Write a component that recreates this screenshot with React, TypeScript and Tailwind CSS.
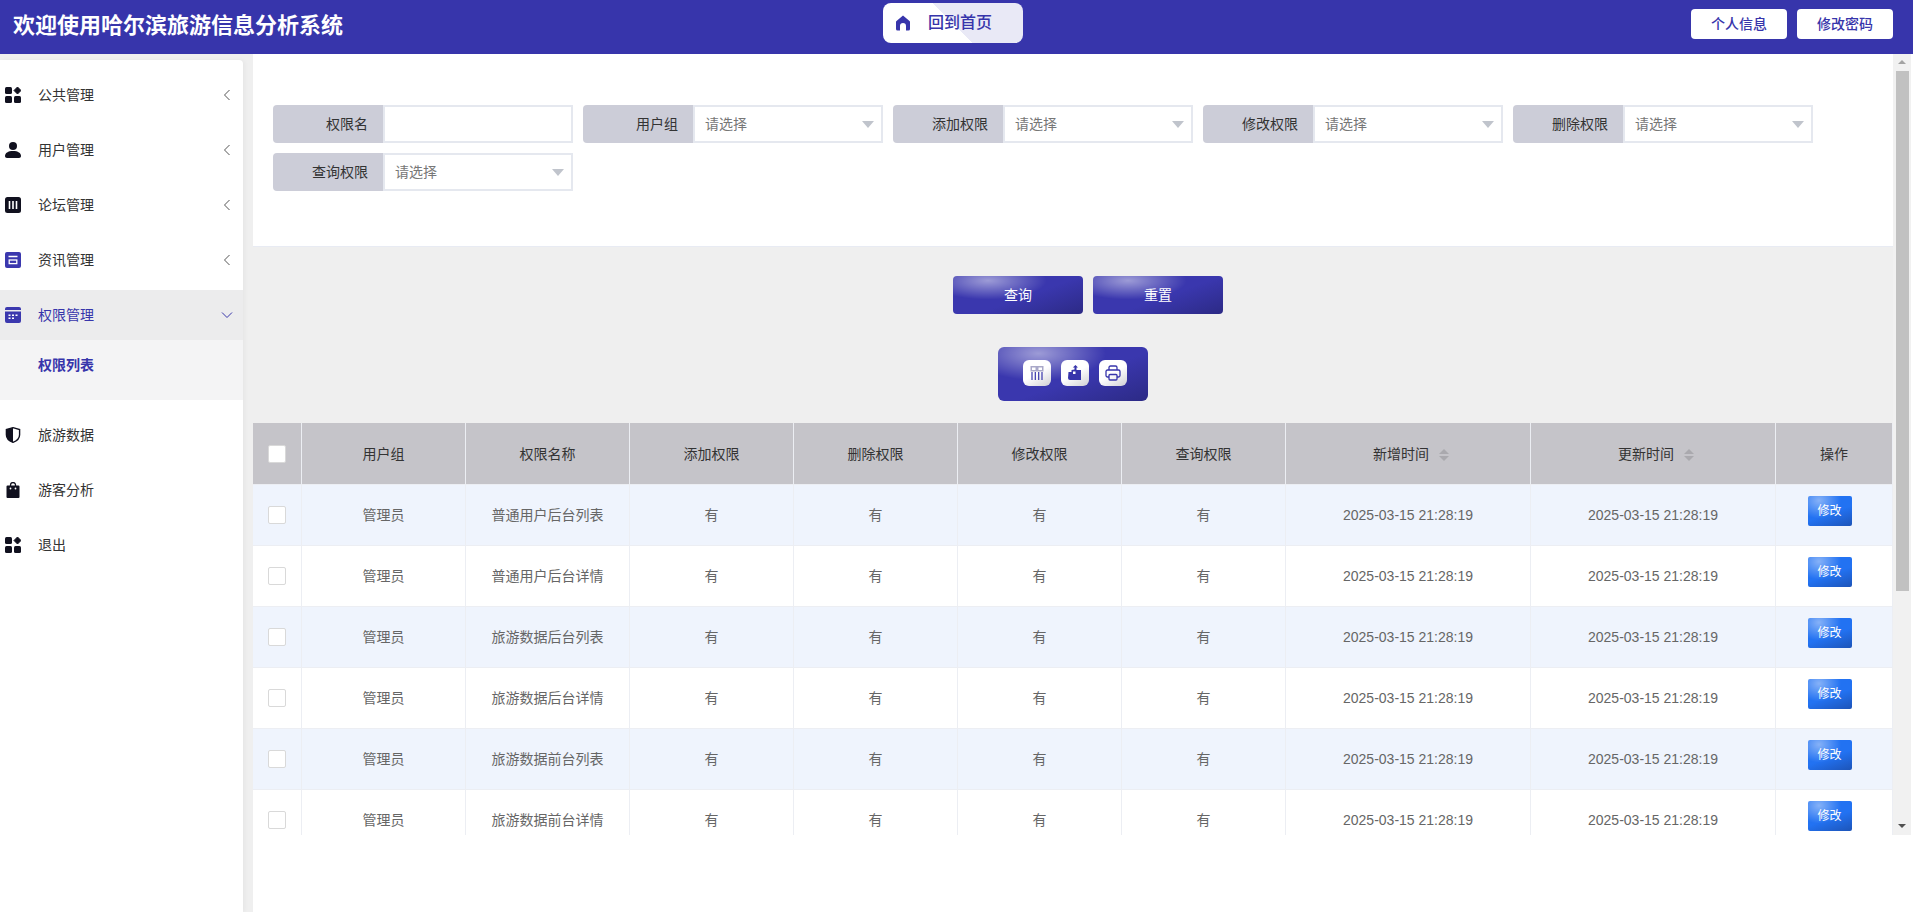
import { ReactNode } from "react";

const FONT = "font-['Liberation_Sans','Noto_Sans_CJK_SC',sans-serif]";
const BTN_BG =
  "bg-[radial-gradient(ellipse_45%_50%_at_27%_12%,rgba(255,255,255,0.5),rgba(255,255,255,0)),linear-gradient(160deg,#3a37ae_55%,#2c2a85)]";
const ICON_BTN =
  "w-[28px] h-[26px] rounded-md flex items-center justify-center bg-[linear-gradient(150deg,#ffffff_50%,#cfcfd4)]";

const AppsIcon = ({ color = "#11111f" }: { color?: string }) => (
  <svg viewBox="0 0 16 16" className="w-4 h-4" fill={color}>
    <rect x="0" y="0" width="7" height="7" rx="1.5" />
    <rect x="0" y="9" width="7" height="7" rx="1.5" />
    <rect x="9" y="9" width="7" height="7" rx="1.5" />
    <path d="M12.5 0 16 3.5 12.5 7 9 3.5Z" strokeLinejoin="round" stroke={color} strokeWidth="1" />
  </svg>
);

const UserIcon = () => (
  <svg viewBox="0 0 16 16" className="w-4 h-4" fill="#11111f">
    <circle cx="8" cy="4" r="4" />
    <path d="M0 14c0-3 3-5 8-5s8 2 8 5c0 1.300-.8 2-2 2H2c-1.200 0-2-.7-2-2Z" />
  </svg>
);

const ColumnsIcon = () => (
  <svg viewBox="0 0 16 16" className="w-4 h-4">
    <rect width="16" height="16" rx="2.500" fill="#11111f" />
    <path d="M4.500 4v8M8 4v8M11.500 4v8" stroke="#fff" strokeWidth="1.600" />
  </svg>
);

const CardIcon = () => (
  <svg viewBox="0 0 16 16" className="w-4 h-4">
    <rect width="16" height="16" rx="2" fill="#3b38ae" />
    <path d="M3.500 4.500h9" stroke="#fff" strokeWidth="1.500" />
    <rect x="4.200" y="8" width="7.600" height="3.600" fill="none" stroke="#fff" strokeWidth="1.300" />
  </svg>
);

const CalendarIcon = () => (
  <svg viewBox="0 0 16 16" className="w-4 h-4" fill="#3b38ae">
    <path d="M2 0h12a2 2 0 0 1 2 2v1H0V2a2 2 0 0 1 2-2Z" />
    <path d="M0 4.500h16V14a2 2 0 0 1-2 2H2a2 2 0 0 1-2-2Z" />
    <path d="M3.500 7.500h2v1.500h-2zM7 7.500h2v1.500H7zM10.500 7.500h2v1.500h-2zM3.500 10.500h2V12h-2zM7 10.500h2V12H7z" fill="#fff" />
  </svg>
);

const ShieldIcon = () => (
  <svg viewBox="0 0 16 16" className="w-4 h-4">
    <path d="M8 .7 14.600 2.600v5.200c0 3.600-2.800 6.200-6.600 7.500-3.800-1.300-6.600-3.900-6.600-7.500V2.600Z" fill="#fff" stroke="#11111f" strokeWidth="1.400" />
    <path d="M8 .7 1.400 2.600v5.200c0 3.600 2.800 6.200 6.600 7.500Z" fill="#11111f" />
  </svg>
);

const BagIcon = () => (
  <svg viewBox="0 0 16 16" className="w-4 h-4" fill="#11111f">
    <path d="M5.500 4V3a2.500 2.500 0 0 1 5 0v1" fill="none" stroke="#11111f" strokeWidth="1.300" />
    <path d="M2.500 3.500h11a1 1 0 0 1 1 1V15a1 1 0 0 1-1 1h-11a1 1 0 0 1-1-1V4.500a1 1 0 0 1 1-1Z" />
    <circle cx="5.500" cy="6.500" r=".9" fill="#fff" />
    <circle cx="10.500" cy="6.500" r=".9" fill="#fff" />
  </svg>
);

const HomeIcon = () => (
  <svg viewBox="0 0 16 16" className="w-4 h-4" fill="#3735ab">
    <path d="M8 .5 14.500 6c.5.4.5.8.5 1.300V14a1.500 1.500 0 0 1-1.500 1.500H11V11a3 3 0 0 0-6 0v4.500H2.500A1.500 1.500 0 0 1 1 14V7.300C1 6.800 1 6.400 1.500 6Z" />
  </svg>
);

const Chevron = ({ open }: { open?: boolean }) => (
  <svg viewBox="0 0 12 12" className="w-3 h-3" fill="none" stroke={open ? "#3735ab" : "#555"} strokeWidth="1">
    {open ? <path d="M1 3.500 6 8.500 11 3.500" /> : <path d="M8.500 1 3.500 6 8.500 11" />}
  </svg>
);

const MenuItem = ({ icon, label, open }: { icon: ReactNode; label: string; open?: boolean }) => (
  <div className={`flex items-center h-[50px] pl-[5px] pr-[10px] ${open ? "bg-[#ececed] text-[#3735ab]" : "mb-[5px] text-[#333]"}`}>
    <span className="w-[33px] flex">{icon}</span>
    <span className="flex-1 text-sm">{label}</span>
    {open !== undefined && <Chevron open={open} />}
  </div>
);

const Caret = () => (
  <span className="w-0 h-0 border-x-[6px] border-x-transparent border-t-[7px] border-t-[#c0c4cc]" />
);

const Field = ({ label, select }: { label: string; select?: boolean }) => (
  <div className="flex w-[300px] h-[38px] mr-[10px] mb-[10px] text-sm">
    <div className="w-[110px] bg-[#cccdd8] rounded-l-[4px] text-right pr-[15px] leading-[38px] text-[#333]">{label}</div>
    <div className="flex-1 border-2 border-[#e5e8ef] bg-white flex items-center justify-between pl-[10px] pr-[7px] text-[#777]">
      {select && (
        <>
          <span>请选择</span>
          <Caret />
        </>
      )}
    </div>
  </div>
);

const SortCaret = () => (
  <span className="inline-flex flex-col gap-[2px] ml-[10px] -mr-[6px] align-middle">
    <span className="w-0 h-0 border-x-[5px] border-x-transparent border-b-[5px] border-b-[#aaa9ae]" />
    <span className="w-0 h-0 border-x-[5px] border-x-transparent border-t-[5px] border-t-[#aaa9ae]" />
  </span>
);

const columns = [
  { label: "用户组", width: "w-[164px]" },
  { label: "权限名称", width: "w-[164px]" },
  { label: "添加权限", width: "w-[164px]" },
  { label: "删除权限", width: "w-[164px]" },
  { label: "修改权限", width: "w-[164px]" },
  { label: "查询权限", width: "w-[164px]" },
  { label: "新增时间", width: "w-[245px]", sort: true },
  { label: "更新时间", width: "w-[245px]", sort: true },
  { label: "操作", width: "w-[117px]" },
];

const rows = [
  "普通用户后台列表",
  "普通用户后台详情",
  "旅游数据后台列表",
  "旅游数据后台详情",
  "旅游数据前台列表",
  "旅游数据前台详情",
];

const cell = "border-r border-b border-[#eceef3] text-center";

export default function App() {
  return (
    <div className={`${FONT} w-[1913px] h-[912px] overflow-hidden bg-white flex flex-col`}>
      <header className="h-[54px] shrink-0 bg-[#3735ab] flex items-start">
        <div className="w-[883px] pl-[13px] pt-[9px] text-[22px] leading-[34px] font-bold text-white">
          欢迎使用哈尔滨旅游信息分析系统
        </div>
        <div className="mt-[3px] w-[140px] h-[40px] rounded-lg flex items-center pl-[12px] bg-[linear-gradient(45deg,#ffffff_50%,#e9e9f6_50%)]">
          <HomeIcon />
          <span className="ml-[17px] text-base font-medium text-[#3735ab]">回到首页</span>
        </div>
        <div className="ml-auto flex gap-[10px] pt-[9px] pr-[20px]">
          <button className="w-[96px] h-[30px] bg-white rounded text-sm font-medium text-[#3735ab]">个人信息</button>
          <button className="w-[96px] h-[30px] bg-white rounded text-sm font-medium text-[#3735ab]">修改密码</button>
        </div>
      </header>

      <div className="flex-1 flex min-h-0">
        <aside className="w-[253px] shrink-0 bg-[#efefef] pt-[6px] pr-[10px]">
          <nav className="h-full bg-white rounded-tr-[4px] pt-[10px] shadow-[2px_0_4px_rgba(0,0,0,0.04)]">
            <MenuItem icon={<AppsIcon />} label="公共管理" open={false} />
            <MenuItem icon={<UserIcon />} label="用户管理" open={false} />
            <MenuItem icon={<ColumnsIcon />} label="论坛管理" open={false} />
            <MenuItem icon={<CardIcon />} label="资讯管理" open={false} />
            <MenuItem icon={<CalendarIcon />} label="权限管理" open />
            <div className="h-[60px] bg-[#f4f4f5] pl-[38px] pt-[15px] text-sm font-bold text-[#3735ab]">权限列表</div>
            <div className="pt-[10px]">
              <MenuItem icon={<ShieldIcon />} label="旅游数据" />
              <MenuItem icon={<BagIcon />} label="游客分析" />
              <MenuItem icon={<AppsIcon />} label="退出" />
            </div>
          </nav>
        </aside>

        <div className="flex-1 min-w-0 flex flex-col">
          <div className="h-[781px] flex">
            <main className="w-[1640px] bg-[#efefef] overflow-hidden">
              <section className="h-[193px] bg-white border-b border-[#e8ebf3] pl-[20px] pt-[51px] flex flex-wrap content-start">
                <Field label="权限名" />
                <Field label="用户组" select />
                <Field label="添加权限" select />
                <Field label="修改权限" select />
                <Field label="删除权限" select />
                <Field label="查询权限" select />
              </section>

              <div className="flex justify-center gap-[10px] pl-[30px] mt-[29px]">
                <button className={`w-[130px] h-[38px] rounded text-sm text-white ${BTN_BG}`}>查询</button>
                <button className={`w-[130px] h-[38px] rounded text-sm text-white ${BTN_BG}`}>重置</button>
              </div>

              <div className="flex justify-center mt-[33px]">
                <div className={`w-[150px] h-[54px] rounded-md flex items-start pl-[25px] pt-[13px] gap-[10px] ${BTN_BG}`}>
                  <span className={ICON_BTN}>
                    <svg viewBox="0 0 16 16" className="w-4 h-4" fill="none">
                      <rect x="1.500" y="1" width="13" height="5.500" fill="#a9a8c8" />
                      <rect x="3" y="2.500" width="3.500" height="2.500" fill="#fff" />
                      <rect x="9.500" y="2.500" width="3.500" height="2.500" fill="#fff" />
                      <path d="M3 7v8M6.300 7v8M9.700 7v8M13 7v8" stroke="#3735ab" strokeWidth="1.200" />
                    </svg>
                  </span>
                  <span className={ICON_BTN}>
                    <svg viewBox="0 0 16 16" className="w-4 h-4" fill="#3735ab">
                      <path d="M1.500 7h3V5l3-.5V2.500H5.800L8.500 0l2.500 2.500H9.500V5h4.500v10H3a2 2 0 0 1-2-2Z" />
                      <rect x="6" y="6.500" width="2.500" height="2.500" fill="#fff" />
                    </svg>
                  </span>
                  <span className={ICON_BTN}>
                    <svg viewBox="0 0 16 16" className="w-4 h-4" fill="none" stroke="#3735ab" strokeWidth="1.300">
                      <path d="M4 5V2.500A1.500 1.500 0 0 1 5.500 1h5A1.500 1.500 0 0 1 12 2.500V5" />
                      <path d="M4 12H2.500A1.500 1.500 0 0 1 1 10.500v-4A1.500 1.500 0 0 1 2.500 5h11A1.500 1.500 0 0 1 15 6.500v4a1.500 1.500 0 0 1-1.500 1.500H12" />
                      <rect x="4" y="9.500" width="8" height="5.500" rx="1" />
                    </svg>
                  </span>
                </div>
              </div>

              <table className="mt-[22px] table-fixed border-separate border-spacing-0 w-[1640px] text-sm">
                <thead>
                  <tr className="h-[62px] bg-[#c5c4c9] text-[#333]">
                    <th className={`${cell} w-[49px] font-normal`}>
                      <span className="block w-[18px] h-[18px] ml-[15px] bg-white border border-[#d9d9d9] rounded-[2px]" />
                    </th>
                    {columns.map((col) => (
                      <th key={col.label} className={`${cell} ${col.width} font-normal`}>
                        {col.label}
                        {col.sort && <SortCaret />}
                      </th>
                    ))}
                  </tr>
                </thead>
                <tbody>
                  {rows.map((name, i) => (
                    <tr key={name} className={`h-[61px] text-[#666] ${i % 2 === 0 ? "bg-[#eff4fd]" : "bg-white"}`}>
                      <td className={cell}>
                        <span className="block w-[18px] h-[18px] ml-[15px] bg-white border border-[#d9d9d9] rounded-[2px]" />
                      </td>
                      <td className={cell}>管理员</td>
                      <td className={cell}>{name}</td>
                      <td className={cell}>有</td>
                      <td className={cell}>有</td>
                      <td className={cell}>有</td>
                      <td className={cell}>有</td>
                      <td className={cell}>2025-03-15 21:28:19</td>
                      <td className={cell}>2025-03-15 21:28:19</td>
                      <td className={cell}>
                        <button className="w-[44px] h-[30px] mb-[9px] mr-[9px] rounded-[2px] text-xs text-white bg-[radial-gradient(ellipse_50%_60%_at_25%_15%,rgba(255,255,255,0.45),rgba(255,255,255,0)),linear-gradient(160deg,#2272f2_55%,#1d54b8)]">
                          修改
                        </button>
                      </td>
                    </tr>
                  ))}
                </tbody>
              </table>
            </main>

            <div className="w-[18px] bg-[#f1f1f1] flex flex-col items-center">
              <span className="mt-[6px] w-0 h-0 border-x-[4px] border-x-transparent border-b-[4px] border-b-[#a3a3a3]" />
              <span className="mt-[7px] w-[13px] h-[520px] bg-[#c1c1c1]" />
              <span className="mt-auto mb-[7px] w-0 h-0 border-x-[4px] border-x-transparent border-t-[4px] border-t-[#505050]" />
            </div>
          </div>
        </div>
      </div>
    </div>
  );
}
